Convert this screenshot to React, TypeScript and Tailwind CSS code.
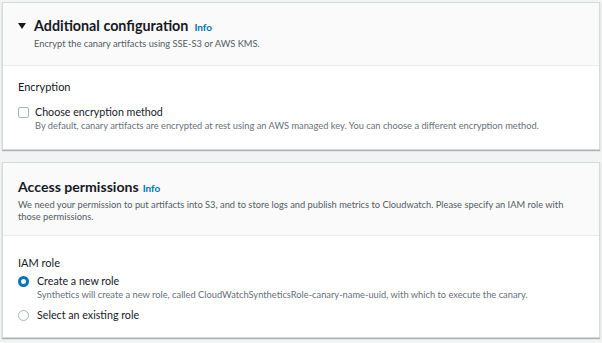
export default function App() {
  return (
    <div className="w-[602px] h-[343px] bg-[#f2f3f3] px-[2px] pt-[2px] overflow-hidden" style={{ fontFamily: 'Lato, "Open Sans", sans-serif' }}>
      <div className="bg-white border border-[#d5dbdb] shadow-[0_1px_1px_rgba(0,28,36,0.3)] h-[148px]">
        <div className="bg-[#fafafa] border-b border-[#eaeded] h-[63px] pl-[15px] pt-[13px]">
          <div className="flex items-center">
            <svg width="8" height="6" viewBox="0 0 8 6" className="mr-[8px]">
              <path d="M0 0 L8 0 L4 6 Z" fill="#16191f" />
            </svg>
            <span className="text-[14.3px] font-bold text-[#16191f] leading-[20px]">Additional configuration</span>
            <span className="text-[10px] font-bold text-[#0073bb] ml-[6px] mt-[2px]">Info</span>
          </div>
          <div className="text-[9.3px] text-[#545b64] pl-[16px] leading-[14px] mt-[1px]">Encrypt the canary artifacts using SSE-S3 or AWS KMS.</div>
        </div>
        <div className="pl-[15px] pt-[13px]">
          <div className="text-[11px] text-[#16191f] leading-[16px]">Encryption</div>
          <div className="flex mt-[9px]">
            <div className="w-[11px] h-[11px] border border-[#aab7b8] rounded-[2px] mt-[3px] mr-[6px] bg-white" />
            <div>
              <div className="text-[10.7px] text-[#16191f] leading-[16px]">Choose encryption method</div>
              <div className="text-[9.3px] text-[#687078] leading-[11px]">By default, canary artifacts are encrypted at rest using an AWS managed key. You can choose a different encryption method.</div>
            </div>
          </div>
        </div>
      </div>

      <div className="bg-white border border-[#d5dbdb] shadow-[0_1px_1px_rgba(0,28,36,0.3)] h-[176px] mt-[12px]">
        <div className="bg-[#fafafa] border-b border-[#eaeded] h-[73px] pl-[15px] pt-[14px]">
          <div className="flex items-center">
            <span className="text-[14.1px] font-bold text-[#16191f] leading-[20px]">Access permissions</span>
            <span className="text-[10px] font-bold text-[#0073bb] ml-[4px] mt-[2px]">Info</span>
          </div>
          <div className="text-[9.3px] text-[#545b64] leading-[12px] mt-[2px] w-[550px]">We need your permission to put artifacts into S3, and to store logs and publish metrics to Cloudwatch. Please specify an IAM role with those permissions.</div>
        </div>
        <div className="pl-[15px] pt-[19px]">
          <div className="text-[11px] text-[#16191f] leading-[16px]">IAM role</div>
          <div className="flex mt-[2px]">
            <div className="w-[11px] h-[11px] rounded-full border-[3px] border-[#0073bb] mt-[3px] mr-[8px] bg-white" />
            <div>
              <div className="text-[10.7px] text-[#16191f] leading-[16px]">Create a new role</div>
              <div className="text-[9.3px] text-[#687078] leading-[11px]">Synthetics will create a new role, called CloudWatchSyntheticsRole-canary-name-uuid, with which to execute the canary.</div>
            </div>
          </div>
          <div className="flex mt-[7px]">
            <div className="w-[11px] h-[11px] rounded-full border border-[#aab7b8] mt-[3px] mr-[8px] bg-white" />
            <div className="text-[10.7px] text-[#16191f] leading-[16px]">Select an existing role</div>
          </div>
        </div>
      </div>
    </div>
  );
}
